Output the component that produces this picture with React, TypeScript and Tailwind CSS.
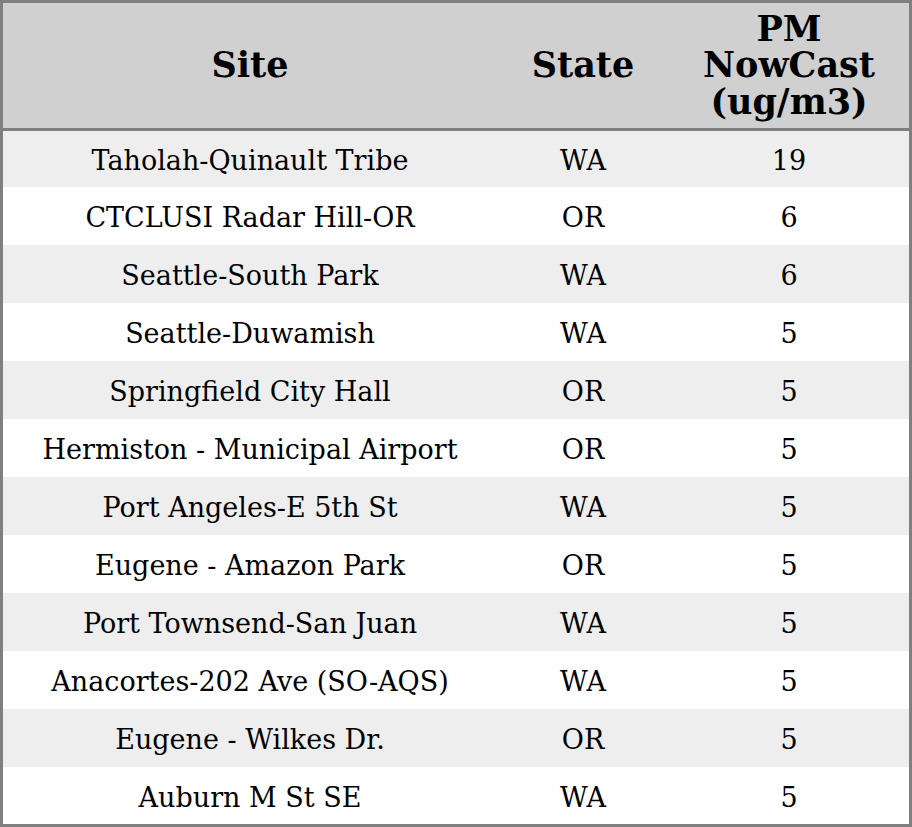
const rows: [string, string, string][] = [
  ['Taholah-Quinault Tribe', 'WA', '19'],
  ['CTCLUSI Radar Hill-OR', 'OR', '6'],
  ['Seattle-South Park', 'WA', '6'],
  ['Seattle-Duwamish', 'WA', '5'],
  ['Springfield City Hall', 'OR', '5'],
  ['Hermiston - Municipal Airport', 'OR', '5'],
  ['Port Angeles-E 5th St', 'WA', '5'],
  ['Eugene - Amazon Park', 'OR', '5'],
  ['Port Townsend-San Juan', 'WA', '5'],
  ['Anacortes-202 Ave (SO-AQS)', 'WA', '5'],
  ['Eugene - Wilkes Dr.', 'OR', '5'],
  ['Auburn M St SE', 'WA', '5'],
];

export default function App() {
  return (
    <div className="h-[827px] w-[912px] overflow-hidden border-[3px] border-[#808080] bg-white font-['DejaVu_Serif',serif] text-black">
      <div className="grid h-[128px] grid-cols-[494px_172px_240px] items-center border-b-[3px] border-[#808080] bg-[#d0d0d0] text-center text-[35px] font-bold leading-[36.5px]">
        <div>Site</div>
        <div>State</div>
        <div>
          PM
          <br />
          NowCast
          <br />
          (ug/m3)
        </div>
      </div>
      {rows.map(([site, state, pm], i) => (
        <div
          key={site}
          className={`grid grid-cols-[494px_172px_240px] items-center pt-[5px] text-center text-[27px] ${
            i === 0 ? 'h-[56px]' : i === rows.length - 1 ? 'h-[57px]' : 'h-[58px]'
          } ${i % 2 === 0 ? 'bg-[#eeeeee]' : 'bg-white'}`}
        >
          <div>{site}</div>
          <div>{state}</div>
          <div>{pm}</div>
        </div>
      ))}
    </div>
  );
}
